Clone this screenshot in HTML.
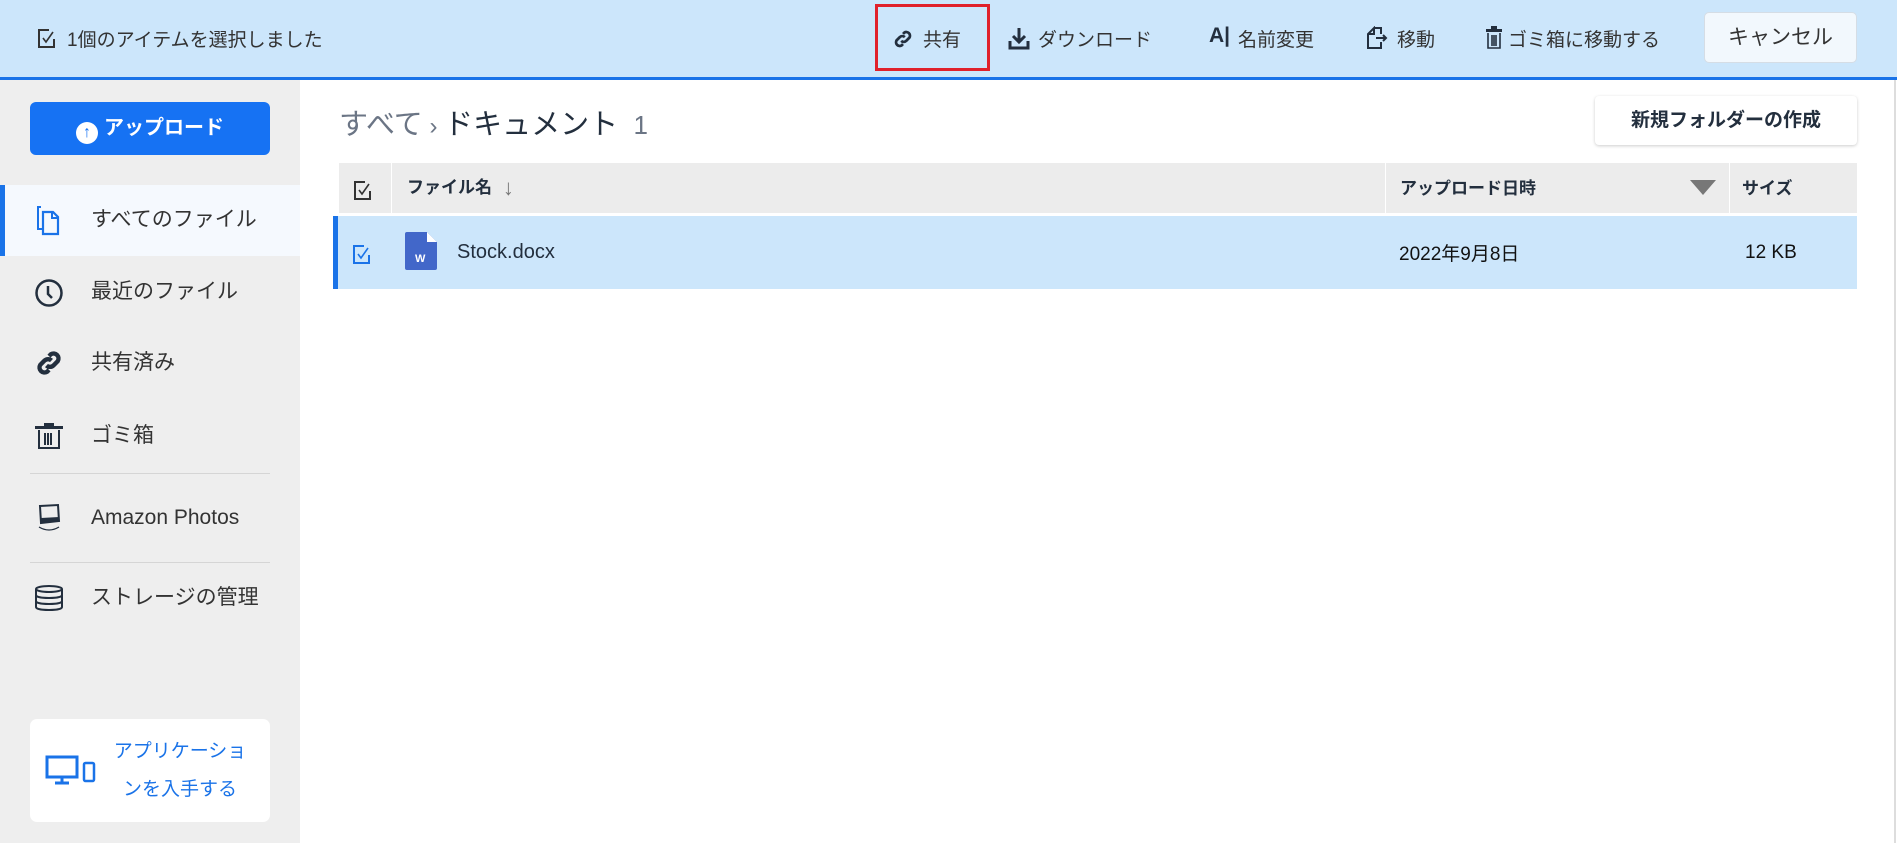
<!DOCTYPE html>
<html><head><meta charset="utf-8"><style>
*{box-sizing:border-box;margin:0;padding:0}
body{width:1897px;height:843px;overflow:hidden;background:#fff;font-family:"Liberation Sans","Noto Sans CJK JP",sans-serif;color:#232f3e;position:relative}
.a{position:absolute;white-space:nowrap}
#hdr{position:absolute;left:0;top:0;width:1897px;background:#cce6fb;border-bottom:3px solid #1a73e8;height:80px}
.ht{font-size:19px;color:#333;top:25px}
#side{position:absolute;left:0;top:80px;width:300px;height:763px;background:#eeeeee}
.si{font-size:21px;color:#333;line-height:30px}
svg{position:absolute}
</style></head><body>
<div id="hdr"></div>
<svg style="left:37px;top:27px" width="20" height="22" viewBox="0 0 20 22"><path d="M12 3H2v17h15v-8" fill="none" stroke="#333" stroke-width="2"/><path d="M6 11l3 4 7-10" fill="none" stroke="#333" stroke-width="1.6"/></svg>
<div class="a ht" style="left:67px">1個のアイテムを選択しました</div>
<div class="a" style="left:875px;top:4px;width:115px;height:67px;border:3px solid #e0212b"></div>
<svg style="left:892px;top:28px" width="22" height="22" viewBox="0 0 24 24"><path d="M10 14a4 4 0 0 0 5.5 0l3.5-3.5a4 4 0 0 0-5.5-5.5l-1.5 1.5M14 10a4 4 0 0 0-5.5 0L5 13.5a4 4 0 0 0 5.5 5.5l1.5-1.5" fill="none" stroke="#232f3e" stroke-width="3"/></svg>
<div class="a ht" style="left:923px">共有</div>
<svg style="left:1008px;top:26px" width="22" height="24" viewBox="0 0 22 24"><path d="M11 2v13M5 10l6 6 6-6" fill="none" stroke="#232f3e" stroke-width="3"/><path d="M2 15v7h18v-7" fill="none" stroke="#232f3e" stroke-width="3"/></svg>
<div class="a ht" style="left:1038px">ダウンロード</div>
<div class="a ht" style="left:1209px;font-weight:bold;font-size:21px;top:24px;color:#232f3e">A|</div>
<div class="a ht" style="left:1238px">名前変更</div>
<svg style="left:1366px;top:26px" width="22" height="24" viewBox="0 0 22 24"><path d="M8 2h7v6M15 16v6H2V8l6-6v6H2" fill="none" stroke="#232f3e" stroke-width="2"/><path d="M10 12h10M17 9l3 3-3 3" fill="none" stroke="#232f3e" stroke-width="2"/></svg>
<div class="a ht" style="left:1397px">移動</div>
<svg style="left:1485px;top:26px" width="18" height="24" viewBox="0 0 18 24"><rect x="1" y="3" width="16" height="3" fill="#232f3e"/><rect x="6" y="0" width="6" height="3" fill="#232f3e"/><path d="M3 7v15h12V7M7 9v11M9 9v11M11 9v11" fill="none" stroke="#232f3e" stroke-width="1.6"/></svg>
<div class="a ht" style="left:1508px">ゴミ箱に移動する</div>
<div class="a" style="left:1704px;top:12px;width:153px;height:51px;background:#f2f8fd;border:1px solid #d5dde5;border-radius:5px;font-size:21px;color:#333;text-align:center;line-height:49px">キャンセル</div>

<div id="side"></div>
<div class="a" style="left:30px;top:102px;width:240px;height:53px;background:#1672f3;border-radius:6px;color:#fff;font-weight:bold;font-size:20px;text-align:center;line-height:53px"><span style="display:inline-block;width:22px;height:22px;border-radius:50%;background:#fff;color:#1672f3;font-size:16px;line-height:22px;vertical-align:-3px;margin-right:6px">↑</span>アップロード</div>
<div class="a" style="left:0;top:185px;width:300px;height:71px;background:#f5f9fe;border-left:5px solid #1a73e8"></div>
<svg style="left:37px;top:206px" width="24" height="30" viewBox="0 0 24 30"><path d="M4 1H1v22h4" fill="none" stroke="#1a73e8" stroke-width="2"/><path d="M6 6h10l5 5v17H6z" fill="none" stroke="#1a73e8" stroke-width="2.2"/><path d="M15 6v6h6" fill="none" stroke="#1a73e8" stroke-width="2"/></svg>
<div class="a si" style="left:91px;top:205px">すべてのファイル</div>
<svg style="left:34px;top:278px" width="30" height="30" viewBox="0 0 30 30"><circle cx="15" cy="15" r="12.5" fill="none" stroke="#232f3e" stroke-width="2.5"/><path d="M14 8v8l4 4" fill="none" stroke="#232f3e" stroke-width="2.5"/></svg>
<div class="a si" style="left:91px;top:277px">最近のファイル</div>
<svg style="left:34px;top:348px" width="30" height="30" viewBox="0 0 24 24"><path d="M10 14a4 4 0 0 0 5.5 0l3.5-3.5a4 4 0 0 0-5.5-5.5l-1.5 1.5M14 10a4 4 0 0 0-5.5 0L5 13.5a4 4 0 0 0 5.5 5.5l1.5-1.5" fill="none" stroke="#232f3e" stroke-width="3.5"/></svg>
<div class="a si" style="left:91px;top:348px">共有済み</div>
<svg style="left:35px;top:422px" width="28" height="28" viewBox="0 0 28 28"><rect x="0" y="4" width="28" height="3" fill="#232f3e"/><rect x="9" y="1" width="10" height="3" fill="#232f3e"/><path d="M4 8v18h20V8M10 11v12M13 11v12M16 11v12" fill="none" stroke="#232f3e" stroke-width="2"/></svg>
<div class="a si" style="left:91px;top:421px">ゴミ箱</div>
<div class="a" style="left:30px;top:473px;width:240px;height:1px;background:#d5d5d5"></div>
<svg style="left:37px;top:503px" width="26" height="30" viewBox="0 0 26 30"><path d="M3 3l18-1 1 16-18 2z" fill="none" stroke="#232f3e" stroke-width="2"/><path d="M4 15l18-1v4l-18 2z" fill="#232f3e"/><path d="M2 24q10 6 20 0" fill="none" stroke="#232f3e" stroke-width="1.3"/></svg>
<div class="a si" style="left:91px;top:503px">Amazon Photos</div>
<div class="a" style="left:30px;top:562px;width:240px;height:1px;background:#d5d5d5"></div>
<svg style="left:34px;top:585px" width="30" height="26" viewBox="0 0 30 26"><ellipse cx="15" cy="4" rx="13" ry="3" fill="none" stroke="#232f3e" stroke-width="2"/><path d="M2 4v18c0 2 6 3 13 3s13-1 13-3V4M2 10c0 2 6 3 13 3s13-1 13-3M2 16c0 2 6 3 13 3s13-1 13-3" fill="none" stroke="#232f3e" stroke-width="2"/></svg>
<div class="a si" style="left:91px;top:583px">ストレージの管理</div>
<div class="a" style="left:30px;top:719px;width:240px;height:103px;background:#fff;border-radius:7px"></div>
<svg style="left:45px;top:755px" width="52" height="30" viewBox="0 0 52 30"><rect x="2" y="2" width="30" height="20" fill="none" stroke="#1a73e8" stroke-width="3"/><path d="M17 22v5M10 28h14" stroke="#1a73e8" stroke-width="3"/><rect x="39" y="8" width="10" height="18" rx="1.5" fill="none" stroke="#1a73e8" stroke-width="2.5"/></svg>
<div class="a" style="left:100px;top:733px;width:160px;text-align:center;font-size:19px;line-height:38px;color:#1a73e8">アプリケーショ<br>ンを入手する</div>

<div class="a" style="left:339px;top:101px;font-size:29px;color:#6b7585">すべて<span style="font-size:24px"> › </span><span style="color:#232f3e">ドキュメント</span> <span style="font-size:26px">&nbsp;1</span></div>
<div class="a" style="left:1595px;top:96px;width:262px;height:49px;background:#fff;border-radius:4px;box-shadow:0 1px 3px rgba(0,0,0,.2);font-weight:bold;font-size:19px;text-align:center;line-height:49px;color:#232f3e">新規フォルダーの作成</div>

<div class="a" style="left:339px;top:163px;width:1518px;height:50px;background:#ececec"></div>
<div class="a" style="left:391px;top:163px;width:1px;height:50px;background:#fff"></div>
<div class="a" style="left:1385px;top:163px;width:1px;height:50px;background:#fff"></div>
<div class="a" style="left:1729px;top:163px;width:1px;height:50px;background:#fff"></div>
<svg style="left:353px;top:179px" width="20" height="22" viewBox="0 0 20 22"><path d="M12 3H2v17h15v-8" fill="none" stroke="#333" stroke-width="2"/><path d="M6 11l3 4 7-10" fill="none" stroke="#333" stroke-width="1.6"/></svg>
<div class="a" style="left:407px;top:173px;font-weight:bold;font-size:17px;color:#232f3e">ファイル名 <span style="color:#777;font-weight:normal;font-size:22px;vertical-align:-2px">&nbsp;↓</span></div>
<div class="a" style="left:1400px;top:174px;font-weight:bold;font-size:17px;color:#232f3e">アップロード日時</div>
<div class="a" style="left:1690px;top:180px;width:0;height:0;border-left:13px solid transparent;border-right:13px solid transparent;border-top:15px solid #777"></div>
<div class="a" style="left:1742px;top:174px;font-weight:bold;font-size:17px;color:#232f3e">サイズ</div>

<div class="a" style="left:333px;top:216px;width:1524px;height:73px;background:#cce6fb;border-left:5px solid #1a73e8"></div>
<svg style="left:352px;top:243px" width="20" height="22" viewBox="0 0 20 22"><path d="M12 3H2v17h15v-8" fill="none" stroke="#1a73e8" stroke-width="2"/><path d="M6 11l3 4 7-10" fill="none" stroke="#1a73e8" stroke-width="1.6"/></svg>
<svg style="left:405px;top:232px" width="32" height="38" viewBox="0 0 32 38"><path d="M2 0h20l10 10v26a2 2 0 0 1-2 2H2a2 2 0 0 1-2-2V2a2 2 0 0 1 2-2z" fill="#4267c9"/><path d="M22 0v10h10z" fill="#fff"/><text x="10" y="30" font-size="11" fill="#fff" font-family="Liberation Sans" font-weight="bold">W</text></svg>
<div class="a" style="left:457px;top:241px;font-size:20px;color:#232f3e">Stock.docx</div>
<div class="a" style="left:1399px;top:239px;font-size:19px;color:#111">2022年9月8日</div>
<div class="a" style="left:1745px;top:242px;font-size:19px;color:#111">12 KB</div>
<div class="a" style="left:1894px;top:80px;width:2px;height:763px;background:#ddd"></div>
</body></html>
